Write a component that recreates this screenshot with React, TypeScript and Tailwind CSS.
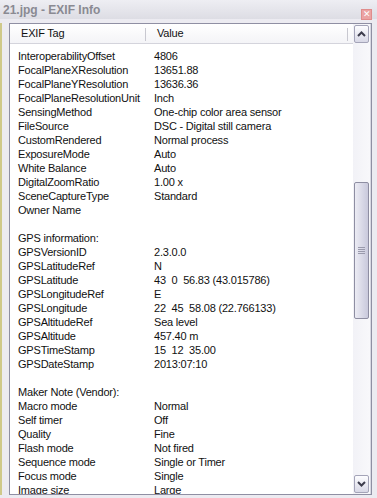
import React from "react";

/* ── Rows of the EXIF list ── */
const ROWS: [string, string][] = [
  ["InteroperabilityOffset", "4806"],
  ["FocalPlaneXResolution", "13651.88"],
  ["FocalPlaneYResolution", "13636.36"],
  ["FocalPlaneResolutionUnit", "Inch"],
  ["SensingMethod", "One-chip color area sensor"],
  ["FileSource", "DSC - Digital still camera"],
  ["CustomRendered", "Normal process"],
  ["ExposureMode", "Auto"],
  ["White Balance", "Auto"],
  ["DigitalZoomRatio", "1.00 x"],
  ["SceneCaptureType", "Standard"],
  ["Owner Name", ""],
  ["", ""],
  ["GPS information:", ""],
  ["GPSVersionID", "2.3.0.0"],
  ["GPSLatitudeRef", "N"],
  ["GPSLatitude", "43  0  56.83 (43.015786)"],
  ["GPSLongitudeRef", "E"],
  ["GPSLongitude", "22  45  58.08 (22.766133)"],
  ["GPSAltitudeRef", "Sea level"],
  ["GPSAltitude", "457.40 m"],
  ["GPSTimeStamp", "15  12  35.00"],
  ["GPSDateStamp", "2013:07:10"],
  ["", ""],
  ["Maker Note (Vendor):", ""],
  ["Macro mode", "Normal"],
  ["Self timer", "Off"],
  ["Quality", "Fine"],
  ["Flash mode", "Not fired"],
  ["Sequence mode", "Single or Timer"],
  ["Focus mode", "Single"],
  ["Image size", "Large"],
];

function Chevron({ up }: { up?: boolean }) {
  return (
    <svg width="9" height="6" viewBox="0 0 9 6">
      <path
        d={up ? "M1 5 L4.5 1.5 L8 5" : "M1 1 L4.5 4.5 L8 1"}
        fill="none"
        stroke="#3c3c4c"
        strokeWidth="2"
      />
    </svg>
  );
}

function ScrollButton({ up }: { up?: boolean }) {
  return (
    <div className="mx-[1px] h-[18px] border border-[#a4a4b8] rounded-[2px] bg-gradient-to-b from-[#fdfdff] to-[#d8d8e6] flex items-center justify-center">
      <Chevron up={up} />
    </div>
  );
}

export default function App() {
  return (
    <div
      className="w-[377px] h-[498px] overflow-hidden bg-[#ecebf1] flex flex-col text-[#111]"
      style={{ fontFamily: '"Liberation Sans", Arial, sans-serif' }}
    >
      {/* Title bar */}
      <div className="h-[19px] shrink-0 flex items-center justify-between pl-[3px] pr-[5px] bg-gradient-to-b from-[#eeeef3] to-[#dddde4]">
        <span className="text-[12px] font-bold text-[#8a8a92]">21.jpg - EXIF Info</span>
        <div className="w-[11px] h-[11px] mt-[9px] bg-[#eba3a3] border border-[#e08c8c] flex items-center justify-center text-white text-[9px] leading-none">
          ✕
        </div>
      </div>

      {/* Body */}
      <div className="flex-1 flex min-h-0 pt-[4px] pb-[3px]">
        <div className="w-[2px] bg-[#cfc98a]" />
        <div className="w-[7px]" />
        <div className="flex-1 flex min-w-0 border border-[#8f8fa3] bg-white">
          {/* List */}
          <div className="flex-1 min-w-0 flex flex-col overflow-hidden text-[11px] tracking-[-0.2px]">
            <div className="h-[20px] shrink-0 flex items-center border-b border-[#d4d4dc] bg-gradient-to-b from-[#ffffff] to-[#f4f4f7]">
              <div className="w-[137px] h-full flex items-center pl-[11px] relative">
                EXIF Tag
                <span className="absolute right-[1px] top-[4px] h-[13px] w-[1px] bg-[#c8c8d0]" />
              </div>
              <div className="w-[201px] h-full flex items-center pl-[10px] relative">
                Value
                <span className="absolute right-0 top-[4px] h-[13px] w-[1px] bg-[#c8c8d0]" />
              </div>
            </div>
            <div className="pt-[5px]">
              {ROWS.map(([tag, value], i) => (
                <div key={i} className="h-[14px] flex items-center whitespace-pre">
                  <div className="w-[144px] pl-[8px]">{tag}</div>
                  <div>{value}</div>
                </div>
              ))}
            </div>
          </div>

          {/* Scrollbar */}
          <div className="w-[18px] shrink-0 flex flex-col bg-gradient-to-r from-[#f2f2f7] to-[#f8f8fb] border-r border-[#d8d8e2] py-[1px]">
            <ScrollButton up />
            <div className="flex-1 flex flex-col pt-[139px]">
              <div className="mx-[1px] h-[137px] border border-[#8e8ea2] rounded-[2px] bg-gradient-to-r from-[#ececf4] to-[#c9c9dc] flex flex-col items-center justify-center gap-[1px]">
                <span className="w-[7px] h-[1px] bg-[#9a9aac]" />
                <span className="w-[7px] h-[1px] bg-[#9a9aac]" />
                <span className="w-[7px] h-[1px] bg-[#9a9aac]" />
                <span className="w-[7px] h-[1px] bg-[#9a9aac]" />
              </div>
            </div>
            <ScrollButton />
          </div>
        </div>
        <div className="w-[5px]" />
      </div>
    </div>
  );
}
